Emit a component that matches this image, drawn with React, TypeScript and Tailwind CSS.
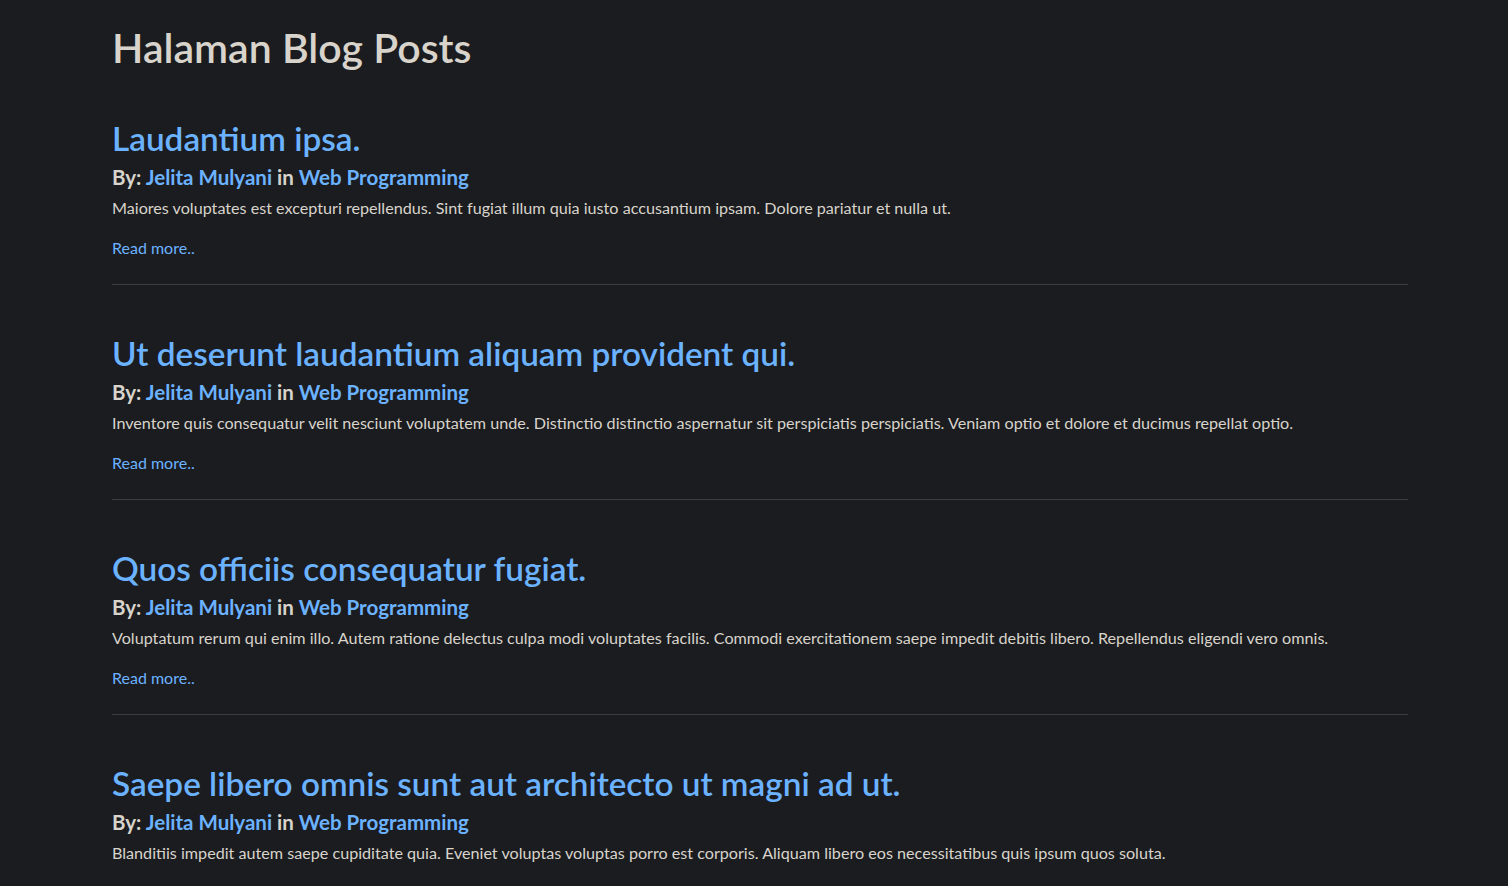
import React from "react";

const posts = [
  {
    title: "Laudantium ipsa.",
    body: "Maiores voluptates est excepturi repellendus. Sint fugiat illum quia iusto accusantium ipsam. Dolore pariatur et nulla ut.",
  },
  {
    title: "Ut deserunt laudantium aliquam provident qui.",
    body: "Inventore quis consequatur velit nesciunt voluptatem unde. Distinctio distinctio aspernatur sit perspiciatis perspiciatis. Veniam optio et dolore et ducimus repellat optio.",
  },
  {
    title: "Quos officiis consequatur fugiat.",
    body: "Voluptatum rerum qui enim illo. Autem ratione delectus culpa modi voluptates facilis. Commodi exercitationem saepe impedit debitis libero. Repellendus eligendi vero omnis.",
  },
  {
    title: "Saepe libero omnis sunt aut architecto ut magni ad ut.",
    body: "Blanditiis impedit autem saepe cupiditate quia. Eveniet voluptas voluptas porro est corporis. Aliquam libero eos necessitatibus quis ipsum quos soluta.",
  },
];

export default function App() {
  return (
    <div
      className="h-[886px] overflow-hidden bg-[#1b1c1f] text-[#d8d4cc]"
      style={{ fontFamily: "Lato, 'Noto Sans', sans-serif" }}
    >
      <div className="ml-[112px] w-[1296px] pt-[24px]">
        <h1 className="text-[41px] leading-[48px] font-semibold mb-[48px]">Halaman Blog Posts</h1>
        {posts.map((p, i) => (
          <article key={i} className="mb-[50px]">
            <h2 className="text-[33.3px] leading-[37px] font-semibold text-[#6bb2ff] mb-[8px]">
              <a href="#">{p.title}</a>
            </h2>
            <h5 className="text-[20.5px] leading-[24px] font-bold mb-[7px]">
              By: <a href="#" className="text-[#6bb2ff]">Jelita Mulyani</a> in{" "}
              <a href="#" className="text-[#6bb2ff]">Web Programming</a>
            </h5>
            <p className="text-[16.15px] leading-[24px] mb-[16px]">{p.body}</p>
            <a href="#" className="block text-[16px] leading-[24px] text-[#6bb2ff]">
              Read more..
            </a>
            <hr className="mt-[24px] border-0 border-t border-[#3a3d41]" />
          </article>
        ))}
      </div>
    </div>
  );
}
